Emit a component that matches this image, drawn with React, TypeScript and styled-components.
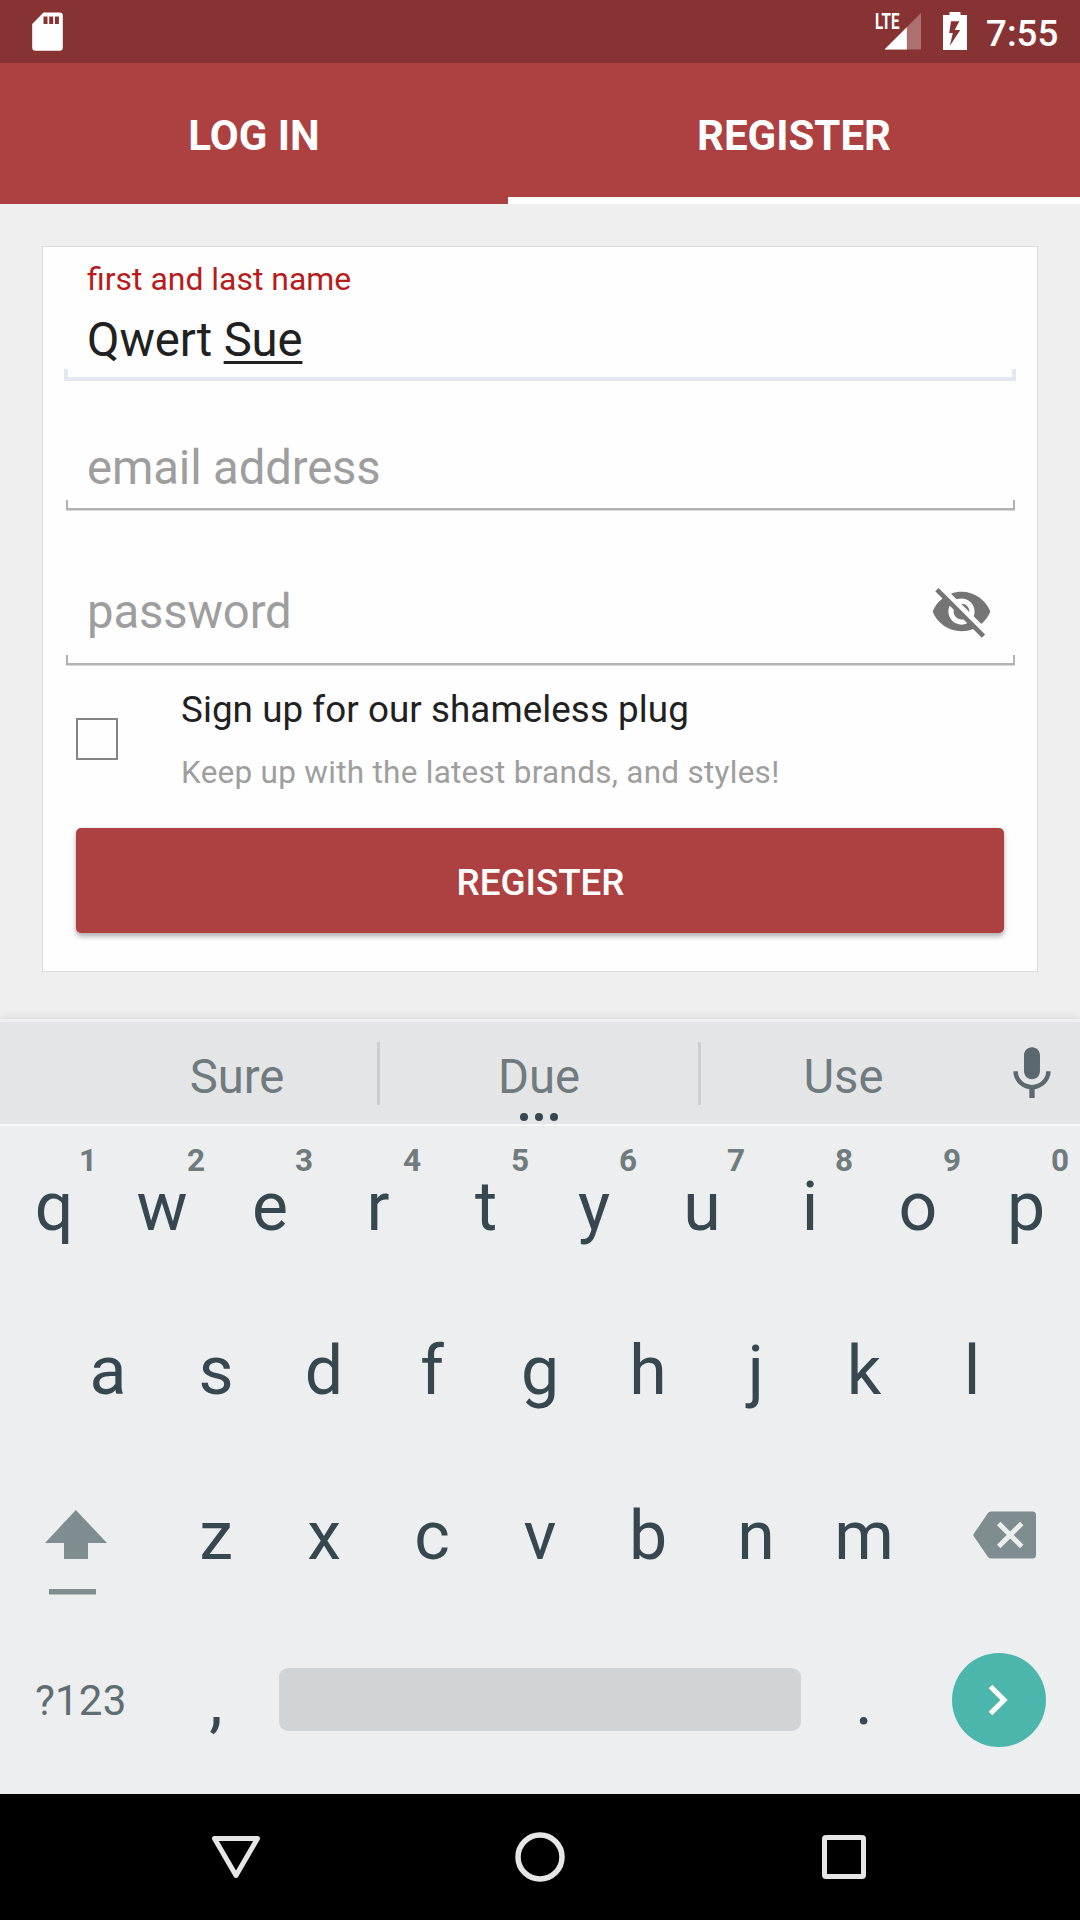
import React from "react";
import styled, { createGlobalStyle } from "styled-components";

const GlobalStyle = createGlobalStyle`
  *, *::before, *::after { box-sizing: border-box; }
  body {
    margin: 0;
    background: #efefef;
    font-family: Roboto, "Noto Sans", sans-serif;
  }
  button { font-family: inherit; border: 0; margin: 0; padding: 0; background: none; }
  svg { display: block; flex: none; }
`;

const Screen = styled.div`
  width: 1080px;
  height: 1920px;
  display: flex;
  flex-direction: column;
  overflow: hidden;
  background: #efefef;
`;

const StatusBar = styled.header`
  height: 63px;
  flex: none;
  display: flex;
  justify-content: space-between;
  padding: 0 22px 0 32px;
  background: #883333;
  color: #fff;
`;

const StatusIcons = styled.div`
  display: flex;
`;

const IconSlot = styled.div`
  padding-top: 12px;
`;

const BatterySlot = styled(IconSlot)`
  margin: 0 19px 0 22px;
`;

const Clock = styled.span`
  width: 72px;
  padding-top: 12px;
  font-size: 36.75px;
  font-weight: 500;
  line-height: 43px;
  white-space: nowrap;
`;

const Tabs = styled.nav`
  height: 141px;
  flex: none;
  display: grid;
  grid-template-columns: 508px 572px;
  background: #ad4141;
`;

const Tab = styled.button<{ $active?: boolean }>`
  padding-top: ${(p) => (p.$active ? 11 : 4)}px;
  border-bottom: ${(p) => (p.$active ? "7px solid #fff" : "0")};
  color: #fff;
  font-size: 42px;
  font-weight: 700;
`;

const Content = styled.main`
  height: 815px;
  flex: none;
  padding: 42px 42px 0;
`;

const Card = styled.form`
  height: 726px;
  display: flex;
  flex-direction: column;
  padding: 0 21px;
  border: 1px solid #dcdcdc;
  background: #fefefe;
`;

const Field = styled.div<{ $top: number }>`
  display: flex;
  flex-direction: column;
  padding-top: ${(p) => p.$top}px;
`;

const FieldLabel = styled.label`
  padding-left: 23px;
  margin-bottom: 15px;
  font-size: 31.95px;
  line-height: 36px;
  color: #b71c1c;
`;

const FieldRow = styled.div<{ $height: number }>`
  height: ${(p) => p.$height}px;
  display: flex;
  align-items: center;
  justify-content: space-between;
  padding: 0 23px;
`;

const FieldText = styled.span<{ $hint?: boolean }>`
  font-size: 47.25px;
  line-height: 56px;
  letter-spacing: -0.13px;
  white-space: pre;
  color: ${(p) => (p.$hint ? "#9e9e9e" : "#212121")};
`;

const Composing = styled.span`
  text-decoration: underline;
  text-decoration-thickness: 3px;
  text-underline-offset: 5px;
  text-decoration-skip-ink: none;
`;

const FocusedLine = styled.div`
  height: 12px;
  margin-top: 1px;
  border: solid #e4e7f2;
  border-width: 0 4px 4px;
`;

const IdleLine = styled.div<{ $gap: number }>`
  height: 10px;
  margin: ${(p) => p.$gap}px 1px 1px 2px;
  border: solid #b2b2b2;
  border-width: 0 2px 2px;
  box-shadow: 0 1px 0 #d8d8d8;
`;

const OptIn = styled.div`
  display: flex;
  align-items: center;
  margin-top: 21px;
  padding-left: 12px;
`;

const Checkbox = styled.span`
  width: 42px;
  height: 42px;
  margin-right: 63px;
  border: 2px solid #858585;
`;

const OptInText = styled.div`
  display: flex;
  flex-direction: column;
  gap: 22px;
`;

const OptInTitle = styled.span`
  padding-top: 1px;
  font-size: 36.75px;
  line-height: 43px;
  letter-spacing: 0.07px;
  color: #212121;
`;

const OptInNote = styled.span`
  padding-top: 1px;
  font-size: 31.5px;
  line-height: 37px;
  letter-spacing: 0.27px;
  color: #9e9e9e;
`;

const SubmitButton = styled.button`
  height: 105px;
  margin: 37px 12px 0;
  padding: 3px 0 0 1px;
  border-radius: 5px;
  background: #ad4141;
  color: #fff;
  font-size: 36.75px;
  font-weight: 500;
  box-shadow: 0 4px 5px rgba(0, 0, 0, 0.26), 0 0 4px rgba(0, 0, 0, 0.1);
`;

const Suggestions = styled.div`
  height: 105px;
  flex: none;
  display: grid;
  grid-template-columns: 97px 280px 3px 318px 3px 285px 94px;
  align-items: center;
  border-top: 3px solid #eeeff0;
  background: #e4e5e6;
  box-shadow: 0 -1px 9px rgba(0, 0, 0, 0.1);
  color: #6f7b7e;
`;

const Suggestion = styled.span`
  position: relative;
  text-align: center;
  font-size: 47.25px;
  line-height: 56px;
  padding-top: 7px;
`;

const Divider = styled.span`
  height: 63px;
  background: #cbcfd2;
`;

const MoreDots = styled.span`
  position: absolute;
  left: 50%;
  bottom: -16px;
  display: flex;
  gap: 7px;
  transform: translateX(-50%);
`;

const Dot = styled.i`
  width: 8px;
  height: 8px;
  border-radius: 50%;
  background: #37474f;
`;

const MicButton = styled.button`
  padding: 2px 2px 0 0;
  justify-self: center;
`;

const Keys = styled.section`
  height: 670px;
  flex: none;
  border-top: 2px solid #f7f8f8;
  background: #eceef0;
`;

const KeyRow = styled.div<{ $columns: string; $height?: number }>`
  height: ${(p) => p.$height ?? 165}px;
  display: grid;
  grid-template-columns: ${(p) => p.$columns};
  align-items: center;
`;

const Key = styled.span`
  position: relative;
  text-align: center;
  color: #37474f;
  font-size: 68px;
  line-height: 80px;
`;

const KeyHint = styled.span`
  position: absolute;
  top: -24px;
  left: 68px;
  width: 40px;
  font-size: 31.5px;
  font-weight: 700;
  line-height: 36px;
  color: #6f7b7d;
`;

const ShiftKey = styled.span`
  padding: 57px 0 0 45px;
  align-self: start;
`;

const DeleteKey = styled.span`
  padding: 0 0 2px 55px;
`;

const SymbolKey = styled.span`
  padding-left: 35px;
  font-size: 42px;
  line-height: 50px;
  letter-spacing: 0.2px;
  color: #5f6d72;
`;

const SpaceBar = styled.span`
  height: 63px;
  margin: 0 9px 2px;
  border-radius: 9px;
  background: #d0d4d7;
`;

const GoKey = styled.span`
  width: 94px;
  height: 94px;
  margin: 0 0 2px 34px;
  display: flex;
  align-items: center;
  justify-content: center;
  border-radius: 50%;
  background: #4db6ac;
`;

const NavBar = styled.footer`
  height: 126px;
  flex: none;
  display: grid;
  grid-template-columns: repeat(3, 304px);
  justify-content: center;
  place-items: center;
  background: #000;
`;

const SdCardIcon = () => (
  <svg width="31" height="39" viewBox="0 0 31 39">
    <path
      fill="#fff"
      fillRule="evenodd"
      d="M11.5.5H27.5a3.3 3.3 0 0 1 3.3 3.3V35.500a3.300 3.300 0 0 1-3.300 3.300H3.500a3.300 3.300 0 0 1-3.300-3.300V12zM11.500 4.500v7.500h4V4.500zM17.200 4.500v7.500h4V4.500zM22.900 4.500v7.500h4V4.500z"
    />
  </svg>
);

const SignalIcon = () => (
  <svg width="50" height="51" viewBox="-4 -12 50 51">
    <path fill="#fff" fillOpacity="0.3" d="M46 1v36.500H9.500z" />
    <path fill="#fff" d="M31.800 15.200v22.300H9.500z" />
    <text
      x="0"
      y="17"
      fill="#fff"
      fontFamily="Roboto, sans-serif"
      fontSize="22"
      fontWeight="700"
      textLength="24.500"
      lengthAdjust="spacingAndGlyphs"
    >
      LTE
    </text>
  </svg>
);

const BatteryIcon = () => (
  <svg width="24" height="39" viewBox="0 0 24 39">
    <path
      fill="#fff"
      fillRule="evenodd"
      d="M6.500 0h11v3H24v35H0V3h6.500zM8 9.200 6.200 21h3.600L6.800 34 17.200 18h-5.400L16.300 9.200z"
    />
  </svg>
);

const VisibilityOffIcon = () => (
  <svg width="63" height="63" viewBox="0 0 24 24" fill="#757575">
    <path d="M12 7c2.760 0 5 2.240 5 5 0 .65-.13 1.260-.36 1.830l2.920 2.920c1.510-1.260 2.700-2.890 3.430-4.750-1.730-4.390-6-7.500-11-7.500-1.400 0-2.740.25-3.980.7l2.160 2.160C10.740 7.130 11.350 7 12 7zM2 4.270l2.280 2.280.46.46C3.080 8.300 1.780 10.020 1 12c1.730 4.390 6 7.500 11 7.500 1.550 0 3.030-.3 4.380-.84l.42.42L19.730 22 21 20.730 3.270 3 2 4.270zM7.530 9.800l1.550 1.550c-.05.21-.08.43-.08.65 0 1.660 1.340 3 3 3 .22 0 .44-.03.65-.08l1.550 1.550c-.67.33-1.410.53-2.200.53-2.760 0-5-2.240-5-5 0-.79.2-1.530.53-2.200zm4.310-.78l3.150 3.150.02-.16c0-1.660-1.340-3-3-3l-.17.01z" />
  </svg>
);

const MicIcon = () => (
  <svg width="64" height="64" viewBox="0 0 24 24" fill="#5b696f">
    <path d="M12 14c1.660 0 2.990-1.340 2.990-3L15 5c0-1.660-1.340-3-3-3S9 3.340 9 5v6c0 1.660 1.340 3 3 3zm5.300-3c0 3-2.540 5.100-5.300 5.100S6.700 14 6.700 11H5c0 3.410 2.720 6.230 6 6.720V21h2v-3.280c3.280-.48 6-3.300 6-6.720h-1.700z" />
  </svg>
);

const ShiftIcon = () => (
  <svg width="62" height="85" viewBox="0 0 62 85" fill="#7f8c90">
    <path d="M30.800 0 62 33H43V49H19V33H0z" />
    <path d="M4 79h47v5.500H4z" />
  </svg>
);

const DeleteIcon = () => (
  <svg width="64" height="48" viewBox="0 0 64 48">
    <path
      fill="#7f8c90"
      d="M18 .5H59.500a3.500 3.500 0 0 1 3.500 3.500V44a3.500 3.500 0 0 1-3.500 3.500H18a4 4 0 0 1-3.200-1.700L.8 25.300a2.200 2.200 0 0 1 0-2.600L14.800 2.200A4 4 0 0 1 18 .5z"
    />
    <path stroke="#eceef0" strokeWidth="5" d="m25.700 12.500 23 23M48.700 12.500l-23 23" />
  </svg>
);

const ChevronIcon = () => (
  <svg width="22" height="34" viewBox="0 0 22 34">
    <path fill="none" stroke="#fff" strokeWidth="5.200" d="M2.500 3.500 16 17 2.500 30.500" />
  </svg>
);

const BackIcon = () => (
  <svg width="50" height="50" viewBox="0 0 50 50">
    <path
      fill="none"
      stroke="#e6e6e6"
      strokeWidth="5"
      strokeLinejoin="round"
      d="M3.500 6.500h43L25 43.500z"
    />
  </svg>
);

const HomeIcon = () => (
  <svg width="50" height="50" viewBox="0 0 50 50">
    <circle cx="25" cy="25" r="22" fill="none" stroke="#e6e6e6" strokeWidth="5.500" />
  </svg>
);

const RecentsIcon = () => (
  <svg width="50" height="50" viewBox="0 0 50 50">
    <rect x="5.500" y="5.500" width="39" height="39" rx="1.500" fill="none" stroke="#e6e6e6" strokeWidth="5" />
  </svg>
);

export default function App() {
  return (
    <Screen>
      <GlobalStyle />
      <StatusBar>
        <IconSlot>
          <SdCardIcon />
        </IconSlot>
        <StatusIcons>
          <SignalIcon />
          <BatterySlot>
            <BatteryIcon />
          </BatterySlot>
          <Clock>7:55</Clock>
        </StatusIcons>
      </StatusBar>

      <Tabs>
        <Tab>LOG IN</Tab>
        <Tab $active>REGISTER</Tab>
      </Tabs>

      <Content>
        <Card>
          <Field $top={14}>
            <FieldLabel>first and last name</FieldLabel>
            <FieldRow $height={56}>
              <FieldText>
                Qwert <Composing>Sue</Composing>
              </FieldText>
            </FieldRow>
            <FocusedLine />
          </Field>
          <Field $top={59}>
            <FieldRow $height={56}>
              <FieldText $hint>email address</FieldText>
            </FieldRow>
            <IdleLine $gap={4} />
          </Field>
          <Field $top={69}>
            <FieldRow $height={63}>
              <FieldText $hint>password</FieldText>
              <VisibilityOffIcon />
            </FieldRow>
            <IdleLine $gap={12} />
          </Field>

          <OptIn>
            <Checkbox />
            <OptInText>
              <OptInTitle>Sign up for our shameless plug</OptInTitle>
              <OptInNote>Keep up with the latest brands, and styles!</OptInNote>
            </OptInText>
          </OptIn>

          <SubmitButton type="button">REGISTER</SubmitButton>
        </Card>
      </Content>

      <Suggestions>
        <span />
        <Suggestion>Sure</Suggestion>
        <Divider />
        <Suggestion>
          Due
          <MoreDots>
            <Dot />
            <Dot />
            <Dot />
          </MoreDots>
        </Suggestion>
        <Divider />
        <Suggestion>Use</Suggestion>
        <MicButton>
          <MicIcon />
        </MicButton>
      </Suggestions>

      <Keys>
        <KeyRow $columns="repeat(10, 108px)" $height={162}>
          {"qwertyuiop".split("").map((letter, i) => (
            <Key key={letter}>
              {letter}
              <KeyHint>{(i + 1) % 10}</KeyHint>
            </Key>
          ))}
        </KeyRow>
        <KeyRow $columns="54px repeat(9, 108px)">
          <span />
          {"asdfghjkl".split("").map((letter) => (
            <Key key={letter}>{letter}</Key>
          ))}
        </KeyRow>
        <KeyRow $columns="162px repeat(7, 108px) 162px">
          <ShiftKey>
            <ShiftIcon />
          </ShiftKey>
          {"zxcvbnm".split("").map((letter) => (
            <Key key={letter}>{letter}</Key>
          ))}
          <DeleteKey>
            <DeleteIcon />
          </DeleteKey>
        </KeyRow>
        <KeyRow $columns="162px 108px 540px 108px 162px">
          <SymbolKey>?123</SymbolKey>
          <Key>,</Key>
          <SpaceBar />
          <Key>.</Key>
          <GoKey>
            <ChevronIcon />
          </GoKey>
        </KeyRow>
      </Keys>

      <NavBar>
        <BackIcon />
        <HomeIcon />
        <RecentsIcon />
      </NavBar>
    </Screen>
  );
}
